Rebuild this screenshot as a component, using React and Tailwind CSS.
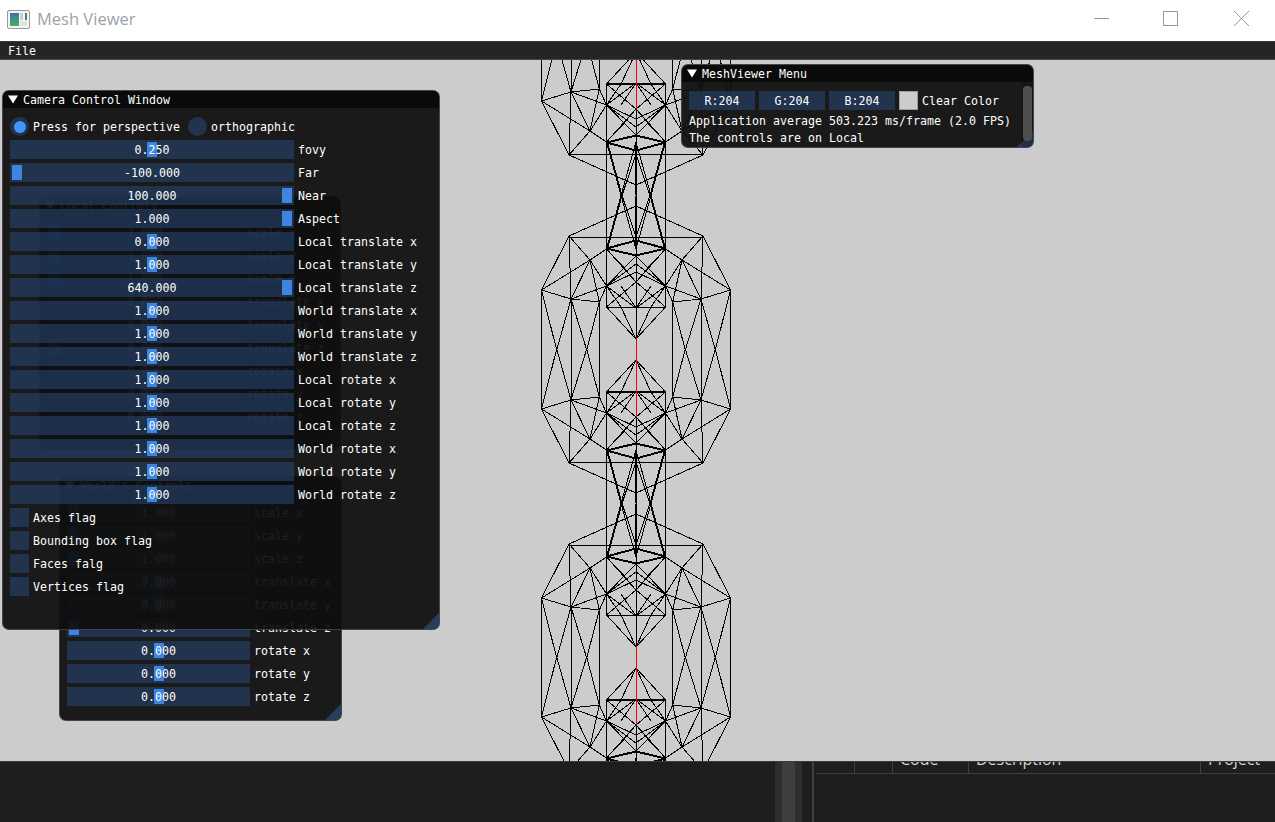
import React from "react";

const OUTER = [
  [-94.5, 349, -94.5, 409], [-65, 349, -65, 400], [-36.7, 349, -36.7, 397],
  [-79.3, 349, -94.5, 409], [-79.3, 349, -65, 400], [-49.3, 349, -65, 400], [-49.3, 349, -36.7, 397],
  [-94.5, 409, -65, 400], [-65, 400, -36.7, 397], [-94.5, 409, -46, 439], [-94.5, 409, -67, 463],
  [-65, 400, -46, 439], [-65, 400, -67, 463], [-36.7, 397, -46, 439], [-46, 439, -67, 463],
  [-46, 439, -29.5, 450], [-46, 439, -29.5, 413], [-65, 400, -29.5, 413], [-36.7, 397, -29.5, 413],
  [-67, 463, 0, 493], [-67, 462, 67, 462],
];
const INNER = [
  [-29.5, 392, -29.5, 503.5], [-29.5, 392, 29.5, 392],
  [0, 360, -29.5, 392], [0, 360, -15, 392], [0, 391, -29.5, 392], [0, 391, -29.5, 413], [0, 391, -15, 413],
  [-29.5, 392, 0, 417], [-15, 392, -29.5, 413],
  [-29.5, 413, 0, 427], [-29.5, 413, 0, 435], [-29.5, 413, 0, 443],
  [-29.5, 450, 0, 443], [-29.5, 451, 0, 444], [-29.5, 450, 0, 458], [-29.5, 451, 0, 459], [-29.5, 450, 0, 417], [-29.5, 450, -8, 427],
  [-29.5, 450, -15, 503.5], [-28, 452, -14, 503.5], [0, 450, -15, 503.5], [0, 462, -14, 503.5],
];
const CX = 636;
const HALF = [...OUTER, ...INNER];
const meshLines = [];
for (const k of [-1, 0, 1]) {
  for (const [x1, y1, x2, y2] of HALF) {
    for (const s of [1, -1]) {
      meshLines.push([CX + s * x1, y1 + 308 * k, CX + s * x2, y2 + 308 * k]);
      meshLines.push([CX + s * x1, 699 - y1 + 308 * k, CX + s * x2, 699 - y2 + 308 * k]);
    }
  }
}

function Mesh() {
  return (
    <svg className="absolute left-0 top-0" width="1275" height="701" viewBox="0 60 1275 701" shapeRendering="crispEdges">
      {meshLines.map((l, i) => (
        <line key={i} x1={l[0]} y1={l[1]} x2={l[2]} y2={l[3]} stroke="#000" strokeWidth="1" />
      ))}
      {[-1, 0, 1].map((k) => (
        <g key={k}>
          <line x1={CX + 0.5} x2={CX + 0.5} y1={417 + 308 * k} y2={646 + 308 * k} stroke="#000" />
          <line x1={CX - 0.5} x2={CX - 0.5} y1={453 + 308 * k} y2={503 + 308 * k} stroke="#000" />
          <line x1={CX - 0.5} x2={CX - 0.5} y1={504 + 308 * k} y2={554 + 308 * k} stroke="#000" />
          <line x1={CX + 0.5} x2={CX + 0.5} y1={338 + 308 * k} y2={417 + 308 * k} stroke="#ff0000" />
        </g>
      ))}
    </svg>
  );
}

function Arrow() {
  return (
    <svg width="10" height="9" viewBox="0 0 10 9" className="shrink-0">
      <path d="M0 0.5H10L5 8.5Z" fill="#fff" />
    </svg>
  );
}

function Grip() {
  return (
    <svg width="16" height="16" viewBox="0 0 16 16" className="absolute bottom-0 right-0">
      <path d="M16 0V16H0Z" fill="#4296fa" fillOpacity="0.3" />
    </svg>
  );
}

function TitleBar({ title }) {
  return (
    <div className="flex h-[17px] shrink-0 items-center gap-[5px] bg-[#0a0a0a] pl-[5px]">
      <Arrow />
      <span className="pt-[2px]">{title}</span>
    </div>
  );
}

function Slider({ w, value, frac, label }) {
  const left = 2 + frac * (w - 14);
  return (
    <div className="flex h-[19px] items-center gap-[4px]">
      <div className="relative flex h-[19px] shrink-0 items-center justify-center bg-[#294a7a8a]" style={{ width: w }}>
        <div className="absolute bottom-[2px] top-[2px] w-[10px] bg-[#3d85e0]" style={{ left }} />
        <span className="relative pt-[2px]">{value}</span>
      </div>
      <span className="pt-[2px]">{label}</span>
    </div>
  );
}

function Check({ label }) {
  return (
    <div className="flex h-[19px] items-center gap-[4px]">
      <div className="h-[19px] w-[19px] bg-[#294a7a8a]" />
      <span className="pt-[2px]">{label}</span>
    </div>
  );
}

function Radio({ on, label }) {
  return (
    <div className="flex h-[19px] items-center gap-[4px]">
      <div className="flex h-[19px] w-[19px] items-center justify-center rounded-full bg-[#294a7a8a]">
        {on && <div className="h-[12px] w-[12px] rounded-full bg-[#4296fa]" />}
      </div>
      <span className="pt-[2px]">{label}</span>
    </div>
  );
}

const WIN = "absolute box-border flex flex-col overflow-hidden rounded-[7px] border border-[#6e6e8080] bg-[#0f0f0ff0]";

const camera = [
  ["0.250", 0.5, "fovy"], ["-100.000", 0, "Far"], ["100.000", 1, "Near"], ["1.000", 1, "Aspect"],
  ["0.000", 0.5, "Local translate x"], ["1.000", 0.5, "Local translate y"], ["640.000", 1, "Local translate z"],
  ["1.000", 0.5, "World translate x"], ["1.000", 0.5, "World translate y"], ["1.000", 0.5, "World translate z"],
  ["1.000", 0.5, "Local rotate x"], ["1.000", 0.5, "Local rotate y"], ["1.000", 0.5, "Local rotate z"],
  ["1.000", 0.5, "World rotate x"], ["1.000", 0.5, "World rotate y"], ["1.000", 0.5, "World rotate z"],
];
const transform = [
  ["1.000", 0, "scale x"], ["1.000", 0, "scale y"], ["1.000", 0, "scale z"],
  ["0.000", 0.5, "translate x"], ["0.000", 0.5, "translate y"], ["0.000", 0, "translate z"],
  ["0.000", 0.5, "rotate x"], ["0.000", 0.5, "rotate y"], ["0.000", 0.5, "rotate z"],
];

function ControlWindow({ title, className, w, rows }) {
  return (
    <div className={`${WIN} ${className}`}>
      <TitleBar title={title} />
      <div className="flex flex-col gap-[4px] pl-[7px] pt-[9px]">
        {rows.map((r) => (
          <Slider key={r[2]} w={w} value={r[0]} frac={r[1]} label={r[2]} />
        ))}
      </div>
      <Grip />
    </div>
  );
}

function AppIcon() {
  return (
    <svg width="23" height="20" viewBox="0 0 23 20" className="mb-[2px] shrink-0">
      <defs>
        <linearGradient id="ig" x1="0" y1="0" x2="0" y2="1">
          <stop offset="0" stopColor="#3f6fa8" />
          <stop offset="0.55" stopColor="#3f9a86" />
          <stop offset="1" stopColor="#4ea565" />
        </linearGradient>
      </defs>
      <rect x="0.5" y="0.5" width="22" height="18" rx="1.5" fill="#f4f4f4" stroke="#9a9a9a" />
      <rect x="3" y="3" width="9" height="13" fill="url(#ig)" />
      <rect x="13" y="3" width="3" height="7" fill="#c9d3cc" />
      <rect x="13" y="11" width="7" height="5" fill="#dfe6e0" />
      <rect x="18" y="3" width="2" height="7" fill="#4f7f72" />
    </svg>
  );
}

export default function App() {
  return (
    <div className="flex h-[822px] w-[1275px] flex-col overflow-hidden bg-[#1e1e1e] font-['DejaVu_Sans_Mono',monospace] text-[11.6px] leading-[13px] tracking-[0.02px] text-white whitespace-pre">
      {/* OS title bar */}
      <div className="flex h-[41px] shrink-0 items-center bg-white pl-[7px]">
        <AppIcon />
        <span className="mb-[3px] ml-[7px] font-['Open_Sans',sans-serif] text-[16.5px] leading-[24px] tracking-normal text-[#9ca2ab]">Mesh Viewer</span>
        <div className="ml-auto flex items-center">
          <svg width="200" height="20" viewBox="0 0 200 20" className="mb-[2px] mr-[1px]" shapeRendering="crispEdges">
            <line x1="20" y1="8.5" x2="35" y2="8.5" stroke="#999" />
            <rect x="89.5" y="1.5" width="14" height="14" fill="none" stroke="#999" />
            <path d="M160 1L175 16M175 1L160 16" stroke="#999" fill="none" shapeRendering="auto" />
          </svg>
        </div>
      </div>

      {/* Menu bar */}
      <div className="box-border flex h-[19px] shrink-0 items-center border-y border-y-[#4a4a4a] border-t-[#3a3a3a] bg-[#252525] pl-[8px]">
        <span className="pt-[2px]">File</span>
      </div>

      {/* GL canvas */}
      <div className="relative flex-1 overflow-hidden bg-[#cccccc]">
        <Mesh />

        <ControlWindow title="World's Controls" className="left-[59px] top-[416px] h-[245px] w-[283px]" w={183} rows={transform} />
        <ControlWindow title="Local Controls" className="left-[39px] top-[136px] h-[254px] w-[302px]" w={196} rows={transform} />

        <div className={`${WIN} left-[2px] top-[30px] h-[540px] w-[438px]`}>
          <TitleBar title="Camera Control Window" />
          <div className="flex flex-col gap-[4px] pl-[7px] pt-[9px]">
            <div className="flex gap-[8px]">
              <Radio on label="Press for perspective" />
              <Radio label="orthographic" />
            </div>
            {camera.map((r) => (
              <Slider key={r[2]} w={284} value={r[0]} frac={r[1]} label={r[2]} />
            ))}
            <Check label="Axes flag" />
            <Check label="Bounding box flag" />
            <Check label="Faces falg" />
            <Check label="Vertices flag" />
          </div>
          <Grip />
        </div>

        <div className={`${WIN} left-[681px] top-[4px] h-[84px] w-[353px]`}>
          <TitleBar title="MeshViewer Menu" />
          <div className="flex flex-col gap-[4px] pl-[7px] pt-[9px]">
            <div className="flex h-[19px] gap-[4px]">
              {["R:204", "G:204", "B:204"].map((t) => (
                <div key={t} className="flex w-[66px] items-center justify-center bg-[#294a7a8a] pt-[2px]">{t}</div>
              ))}
              <div className="box-border h-[19px] w-[19px] border border-[#6e6e8080] bg-[#cccccc]" />
              <span className="pt-[1px] leading-[19px]">Clear Color</span>
            </div>
            <div className="mt-[1px] flex flex-col gap-[4px]">
              <div>Application average 503.223 ms/frame (2.0 FPS)</div>
              <div>The controls are on Local</div>
            </div>
          </div>
          <Grip />
          <div className="absolute bottom-0 right-0 top-[18px] flex w-[12px] justify-center bg-[#0505053a] pb-[6px] pt-[3px]">
            <div className="w-[9px] rounded-[4px] bg-[#4f4f4f]" />
          </div>
        </div>
      </div>

      {/* IDE behind the window */}
      <div className="box-border flex h-[61px] shrink-0 border-t border-t-[#3a3a3a] bg-[#1e1e1e] font-['Open_Sans',sans-serif] text-[16px] tracking-normal text-[#d0d4d8]">
        <div className="w-[775px] shrink-0" />
        <div className="flex w-[27px] shrink-0">
          <div className="w-[7px] bg-[#2d2d2d]" />
          <div className="w-[13px] bg-[#3e3e3e]" />
          <div className="w-[7px] bg-[#2d2d2d]" />
        </div>
        <div className="ml-[10px] w-[2px] shrink-0 bg-[#3f3f3f]" />
        <div className="ml-[3px] flex-1">
          <div className="box-border flex h-[12px] border-b border-b-[#3f3f3f]">
            <div className="w-[38px] border-r border-r-[#3f3f3f]" />
            <div className="w-[38px] border-r border-r-[#3f3f3f]" />
            <div className="w-[76px] overflow-hidden border-r border-r-[#3f3f3f] pl-[7px]"><div className="-mt-[13px] leading-[20px]">Code</div></div>
            <div className="w-[232px] overflow-hidden border-r border-r-[#3f3f3f] pl-[7px]"><div className="-mt-[13px] leading-[20px]">Description</div></div>
            <div className="overflow-hidden pl-[7px]"><div className="-mt-[13px] leading-[20px]">Project</div></div>
          </div>
        </div>
      </div>
    </div>
  );
}
